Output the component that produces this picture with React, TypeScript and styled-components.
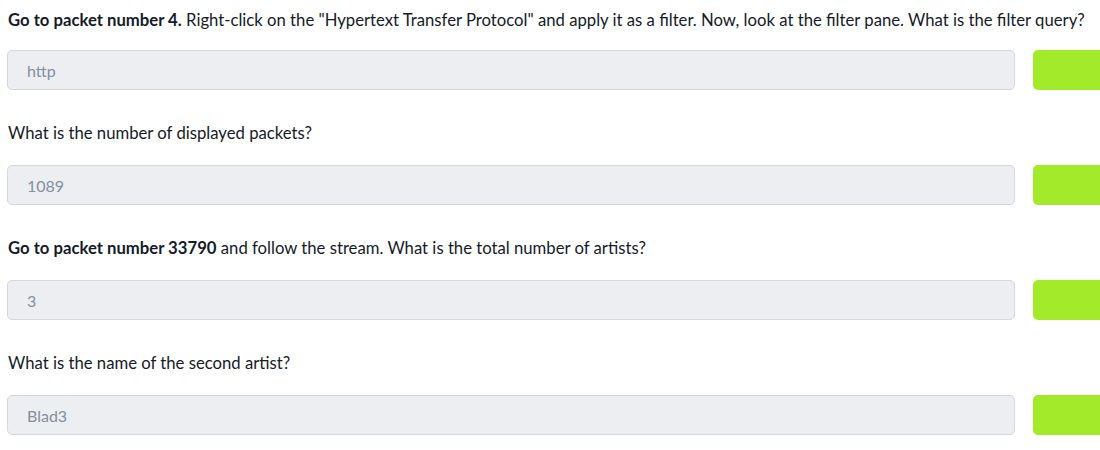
import React from "react";
import styled, { createGlobalStyle } from "styled-components";

const Global = createGlobalStyle`
  html, body {
    margin: 0;
    padding: 0;
    background: #ffffff;
    overflow: hidden;
  }
  body {
    font-family: Lato, "Noto Sans", sans-serif;
  }
`;

const Page = styled.div`
  display: flex;
  flex-direction: column;
  padding: 8px 0 0 7px;
  width: 1200px;
`;

const Block = styled.section<{ $first?: boolean }>`
  display: flex;
  flex-direction: column;
  gap: ${(p) => (p.$first ? "18px" : "20px")};
  margin-bottom: 31px;
`;

const Question = styled.p`
  margin: 0 0 0 1px;
  font-size: 16.7px;
  line-height: 24px;
  color: #151b28;
  white-space: nowrap;
`;

const Strong = styled.b`
  font-weight: 700;
`;

const Row = styled.div`
  display: flex;
  align-items: stretch;
  gap: 18px;
`;

const Answer = styled.div`
  box-sizing: border-box;
  width: 1008px;
  height: 40px;
  display: flex;
  align-items: center;
  padding: 0 19px;
  background: #eceef2;
  border: 1px solid #d3d7de;
  border-radius: 5px;
  font-size: 16px;
  color: #848fa0;
`;

const Submit = styled.button`
  width: 120px;
  height: 40px;
  border: none;
  border-radius: 5px;
  background: #a3ea2a;
  cursor: pointer;
`;

type Item = { q: React.ReactNode; a: string };

const items: Item[] = [
  {
    q: (
      <>
        <Strong>Go to packet number 4.</Strong> Right-click on the "Hypertext Transfer
        Protocol" and apply it as a filter. Now, look at the filter pane. What is the
        filter query?
      </>
    ),
    a: "http",
  },
  { q: <>What is the number of displayed packets?</>, a: "1089" },
  {
    q: (
      <>
        <Strong>Go to packet number 33790</Strong> and follow the stream. What is the
        total number of artists?
      </>
    ),
    a: "3",
  },
  { q: <>What is the name of the second artist?</>, a: "Blad3" },
];

export default function App() {
  return (
    <>
      <Global />
      <Page>
        {items.map((it, i) => (
          <Block key={i} $first={i === 0}>
            <Question>{it.q}</Question>
            <Row>
              <Answer>{it.a}</Answer>
              <Submit aria-label="Submit" />
            </Row>
          </Block>
        ))}
      </Page>
    </>
  );
}
